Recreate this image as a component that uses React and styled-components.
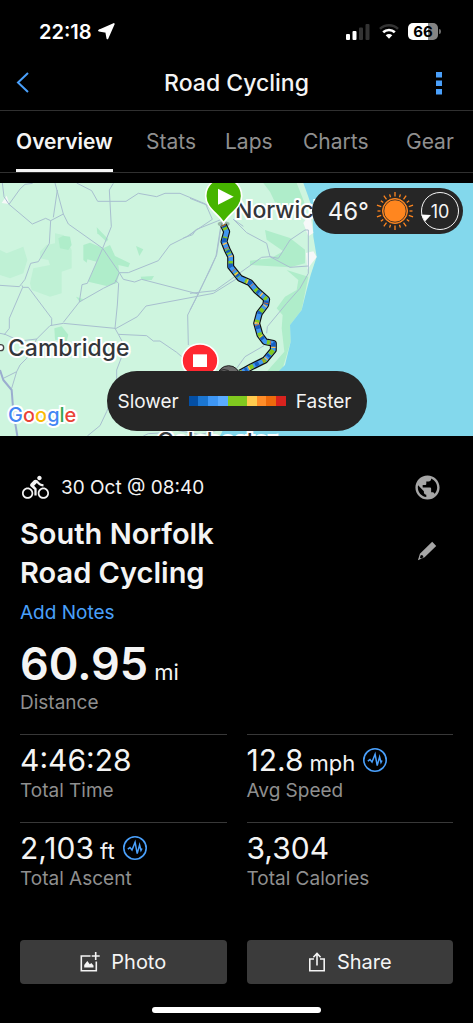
import styled, { createGlobalStyle } from 'styled-components'
import { MdDirectionsBike, MdPublic } from 'react-icons/md'

const GlobalStyle = createGlobalStyle`
  * {
    box-sizing: border-box;
  }

  body {
    margin: 0;
    background: #000;
    color: #f4f4f4;
    font-family: Inter, 'Liberation Sans', sans-serif;
  }

  button {
    padding: 0;
    border: 0;
    background: none;
    color: inherit;
    font: inherit;
    cursor: pointer;
  }

  svg {
    display: block;
    flex: none;
  }
`

const Screen = styled.div`
  display: flex;
  flex-direction: column;
  min-height: 100vh;
`

const StatusBar = styled.div`
  display: flex;
  align-items: center;
  justify-content: space-between;
  height: 56px;
  padding: 7px 32px 0 39px;
`

const StatusGroup = styled.div`
  display: flex;
  align-items: center;
  gap: ${({ $gap }) => $gap}px;
`

const Clock = styled.span`
  color: #fff;
  font-size: 20px;
  font-weight: 600;
`

const Battery = styled.span`
  display: flex;
  align-items: center;
  justify-content: center;
  width: 30px;
  height: 17px;
  border-radius: 5px;
  background: linear-gradient(90deg, #fff 66%, #848484 66%);
  color: #000;
  font-size: 15px;
  font-weight: 700;
`

const BatteryBox = styled.span`
  display: flex;
  align-items: center;
  gap: 1px;

  &::after {
    content: '';
    width: 2px;
    height: 5px;
    border-radius: 0 2px 2px 0;
    background: #6a6a6a;
  }
`

const NavBar = styled.header`
  display: grid;
  grid-template-columns: 44px 1fr 44px;
  align-items: center;
  height: 54px;
  padding: 0 12px;
`

const NavButton = styled.button`
  display: flex;
  align-items: center;
  justify-content: ${({ $end }) => ($end ? 'flex-end' : 'flex-start')};
  height: 44px;
  padding: 0 ${({ $end }) => ($end ? 19 : 4)}px;
`

const NavTitle = styled.h1`
  margin: 0;
  font-size: 23px;
  font-weight: 500;
  text-align: center;
`

const Tabs = styled.nav`
  display: grid;
  grid-template-columns: 130fr 79fr 78fr 103fr 67fr;
  height: 63px;
  padding-left: 16px;
  border-top: 1px solid #303030;
  border-bottom: 1px solid #303030;
`

const Tab = styled.button`
  justify-self: start;
  padding-top: 3px;
  border-bottom: 3px solid ${({ $active }) => ($active ? '#f4f4f4' : 'transparent')};
  color: ${({ $active }) => ($active ? '#f4f4f4' : '#8f8f8f')};
  font-size: 21px;
  font-weight: ${({ $active }) => ($active ? 600 : 400)};
`

const MapArea = styled.section`
  position: relative;
  height: 253px;
  margin-top: 10px;
  overflow: hidden;
  background: #cef5df;
`

const MapLayer = styled.svg`
  position: absolute;
  inset: 0;
  width: 100%;
  height: 100%;
`

const MapLabel = styled.span`
  position: absolute;
  left: ${({ $x }) => $x}px;
  top: ${({ $y }) => $y}px;
  color: #33363a;
  font-size: 23px;
  font-weight: 500;
  line-height: 28px;
  -webkit-text-stroke: 4px #fff;
  paint-order: stroke fill;
`

const GoogleMark = styled(MapLabel)`
  font-size: 20px;
`

const Letter = styled.span`
  color: ${({ $color }) => $color};
`

const Weather = styled.div`
  position: absolute;
  top: 5px;
  right: 10px;
  display: flex;
  align-items: center;
  gap: 7px;
  height: 46px;
  padding: 0 4px 0 16px;
  border-radius: 23px;
  background: #262626;
  font-size: 24px;
`

const Wind = styled.div`
  position: relative;
  display: flex;
  align-items: center;
  justify-content: center;
  width: 38px;
  height: 38px;
  border: 1px solid #f4f4f4;
  border-radius: 50%;
  font-size: 18px;

  svg {
    position: absolute;
    left: -1px;
    top: 21px;
  }
`

const Legend = styled.div`
  position: absolute;
  left: 50%;
  bottom: 5px;
  display: flex;
  align-items: center;
  gap: 10px;
  height: 60px;
  padding: 0 15px 0 11px;
  border-radius: 30px;
  background: #262626;
  font-size: 19px;
  transform: translateX(-50%);
`

const Scale = styled.div`
  display: flex;
  width: 97px;
  height: 10px;
`

const Swatch = styled.span`
  flex: 1;
  background: ${({ $color }) => $color};
`

const Details = styled.main`
  display: flex;
  flex-direction: column;
  flex: 1;
  padding: 36px 20px 10px;
`

const Row = styled.div`
  display: flex;
  align-items: center;
  justify-content: space-between;
`

const DateLine = styled.div`
  display: flex;
  align-items: center;
  gap: 12px;
  height: 30px;
  padding-left: 2px;
  font-size: 19px;
`

const IconButton = styled.button`
  display: flex;
  align-items: center;
  justify-content: center;
  width: 30px;
  height: 30px;
  margin-right: 11px;
  color: #a6a6a6;
`

const ActivityName = styled.h2`
  max-width: 240px;
  margin: 12px 0 8px;
  font-size: 29px;
  font-weight: 600;
  line-height: 39px;
`

const NotesLink = styled.a`
  align-self: flex-start;
  color: #4aa0fb;
  font-size: 19px;
  line-height: 26px;
  text-decoration: none;
`

const Distance = styled.div`
  margin: 12px 0 18px;
`

const Value = styled.div`
  display: flex;
  align-items: baseline;
  gap: 6px;
  height: ${({ $large }) => ($large ? 52 : 36)}px;
  font-size: ${({ $large }) => ($large ? 45 : 30)}px;
  font-weight: ${({ $large }) => ($large ? 600 : 400)};
  line-height: ${({ $large }) => ($large ? 52 : 36)}px;

  svg {
    align-self: center;
    margin-left: 2px;
  }
`

const Unit = styled.span`
  font-size: 22px;
  font-weight: 400;
  line-height: 1;
`

const Label = styled.div`
  color: #8f8f8f;
  font-size: 19px;
  line-height: 26px;
`

const TwoColumns = styled.div`
  display: grid;
  grid-template-columns: 1fr 1fr;
  column-gap: 20px;
`

const Stat = styled.div`
  height: 88px;
  padding-top: 7px;
  border-top: 1px solid #383838;
`

const Actions = styled(TwoColumns)`
  margin-top: 30px;
`

const ActionButton = styled.button`
  display: flex;
  align-items: center;
  justify-content: center;
  gap: 11px;
  height: 44px;
  border-radius: 4px;
  background: #3b3b3b;
  font-size: 20px;
`

const HomeIndicator = styled.div`
  align-self: center;
  width: 169px;
  height: 6px;
  margin-top: auto;
  border-radius: 3px;
  background: #fff;
`

const tabs = ['Overview', 'Stats', 'Laps', 'Charts', 'Gear']

const stats = [
  { label: 'Total Time', value: '4:46:28' },
  { label: 'Avg Speed', value: '12.8', unit: 'mph', trend: true },
  { label: 'Total Ascent', value: '2,103', unit: 'ft', trend: true },
  { label: 'Total Calories', value: '3,304' },
]

const speedColors = [
  '#034fa5',
  '#1b76d2',
  '#3e97f5',
  '#5aabff',
  '#80c91f',
  '#80c91f',
  '#ffcb4e',
  '#ff8d28',
  '#ed6a0c',
  '#d8231e',
]

const googleLetters = [
  ['G', '#4285f4'],
  ['o', '#ea4335'],
  ['o', '#fbbc05'],
  ['g', '#4285f4'],
  ['l', '#34a853'],
  ['e', '#ea4335'],
]

const paleWoods = [
  '0,201 20,211 70,191 82,231 70,271 30,286 0,276',
  '120,206 140,186 165,181 165,151 190,156 215,201 215,256 185,266 185,331 150,341 95,321 90,301 100,256 150,246 145,231 120,226',
]

const woods = [
  '175,166 190,158 210,161 215,186 205,201 180,196',
  '250,186 270,179 310,196 330,186 345,219 390,241 385,253 355,246 358,271 350,301 320,309 265,296 290,236 262,229 260,239 250,231',
  '290,133 325,169 320,176 292,151',
  '408,189 430,199 418,219',
  '422,281 462,279 455,291 425,291',
  '228,341 250,349 240,358',
  '163,436 185,430 205,455 200,475 165,470',
  '790,0 890,0 918,71 880,90 826,60 810,26',
  '795,141 870,165 915,200 915,241 870,253 750,246 750,233 812,226 850,205 800,170',
  '860,261 925,281 905,381 870,426 872,476 845,566 800,566 853,506 845,436 848,396 830,376 855,341 890,321 895,291',
]

const roads = [
  '7,0 12,41 27,64 60,18 75,4 98,1',
  '27,64 97,123 137,106 152,113 190,93',
  '165,0 190,93 205,123 308,196 358,269 385,269 475,233 510,186 560,161 637,109 617,63 540,31 495,31 470,41 415,31 378,55 293,55 275,23 230,0',
  '172,21 160,103',
  '550,165 578,155 588,140',
  '340,1 328,21 334,131 308,196 262,301 246,305 238,357 190,418',
  '152,113 148,181 115,236 92,241 75,289 58,311 0,307',
  '358,269 345,299 310,316 238,357',
  '358,269 370,289 404,297 425,289 595,333 648,219 662,131',
  '345,291 356,301 352,366 345,436',
  '66,307 68,313 28,406 28,436 12,456',
  '68,313 85,313 155,406 155,428',
  '720,281 640,331 438,369 412,401 345,438',
  '595,333 563,396 565,486',
  '0,451 15,454 60,474 110,468 150,428 190,421 345,436 355,454 440,458 460,474 480,474 530,508 545,521',
  '355,454 367,476 367,516 350,561 350,606 320,686 300,728 262,759',
  '110,468 80,526 60,546 50,566 35,616',
  '10,586 50,566',
  '570,46 620,66 665,109',
  '570,156 590,139 665,109',
  '665,121 650,216 630,261 570,381',
  '570,331 645,323 785,223 810,221 870,253 925,249 925,141 915,141 870,171 835,226 810,221 800,181 740,149 700,109 730,130',
  '925,249 925,271 900,316 860,361 802,431 800,451',
  '792,488 735,521 710,556',
  '430,759 445,752 480,750 520,740 600,755 650,742',
]

const route =
  '670,126 680,146 672,176 682,201 692,221 692,251 720,286 750,299 768,321 800,349 797,366 778,391 770,421 780,456 795,476 820,481 820,501 795,531 755,551 720,570'

const routeDashes = [
  ['#82c91e', '16 22 9 31'],
  ['#175ec0', '8 34 12 27'],
  ['#ffc04d', '3 55 4 38'],
  ['#e96a1c', '2 71'],
]

function MapDrawing() {
  return (
    <MapLayer viewBox="0 0 1419 759" preserveAspectRatio="xMinYMid slice">
      {paleWoods.map((points) => (
        <polygon key={points} points={points} fill="#bff1d5" />
      ))}
      {woods.map((points) => (
        <polygon key={points} points={points} fill="#afedca" />
      ))}
      <path
        d="M910 0 925 41 938 81 940 161 950 221 932 276 920 321 905 381 870 426 872 476 855 546 800 600 690 700 660 759H1419V0Z"
        fill="#83d8ec"
      />
      <path d="M918 210 940 205 950 222 932 245 922 260ZM910 120l20-30 10 60-15 10ZM5 60l15-22 8 25Z" fill="#f6f8f8" />
      <g fill="none" stroke="#a8bfcf" strokeWidth="3" strokeLinejoin="round">
        {roads.map((points) => (
          <polyline key={points} points={points} />
        ))}
        <polyline points="0,561 10,591 35,621 40,686 52,759" stroke="#9badcf" strokeWidth="6" />
      </g>
      <circle cx="2" cy="494" r="9" fill="#fff" stroke="#444" strokeWidth="4" />
      <g fill="none" strokeLinejoin="round">
        <polyline points={route} stroke="#111" strokeWidth="21" />
        <polyline points={route} stroke="#4297ee" strokeWidth="14" />
        {routeDashes.map(([color, dash]) => (
          <polyline key={color} points={route} stroke={color} strokeWidth="13" strokeDasharray={dash} />
        ))}
      </g>
    </MapLayer>
  )
}

function MapPins() {
  return (
    <MapLayer viewBox="0 0 1419 759" preserveAspectRatio="xMinYMid slice">
      <ellipse cx="671" cy="123" rx="18" ry="8" fill="#000" opacity="0.25" />
      <path
        d="M671 120C656 92 617 76 617 39a54 54 0 0 1 108 0C725 76 686 92 671 120Z"
        fill="#46b400"
        stroke="#fff"
        strokeWidth="5"
      />
      <path d="M654 17 701 41 654 65Z" fill="#fff" />
      <circle cx="686" cy="582" r="34" fill="#6a6a6a" stroke="#222" strokeWidth="3" />
      <circle cx="672" cy="590" r="30" fill="none" stroke="#222" strokeWidth="3" />
      <ellipse cx="600" cy="533" rx="54" ry="50" fill="#ff2730" stroke="#fff" strokeWidth="5" />
      <path d="M579 514h42v38h-42Z" fill="#fff" />
    </MapLayer>
  )
}

function Sun() {
  return (
    <svg width="38" height="38" viewBox="-19 -19 38 38" stroke="#ff861f">
      <circle r="12.5" fill="#ff861f" strokeWidth="1" />
      <circle r="11.2" fill="none" stroke="#262626" strokeWidth="0.8" />
      {Array.from({ length: 20 }, (_, i) => (
        <path key={i} d={i % 2 ? 'M0-14.5V-17.5' : 'M0-14.5V-19'} strokeWidth="1.3" transform={`rotate(${i * 18})`} />
      ))}
    </svg>
  )
}

function TrendIcon() {
  return (
    <svg width="24" height="24" viewBox="0 0 24 24" fill="none" stroke="#4aa0fb">
      <circle cx="12" cy="12" r="11.2" strokeWidth="1.6" />
      <path d="M4.8 13.2 7 11.6 9 14 12.1 6.2 14.2 17.6 16.6 9 18 14.4 19 12.5" strokeWidth="1.5" />
    </svg>
  )
}

function StatusIcons() {
  return (
    <StatusGroup $gap={9}>
      <svg width="24" height="16" viewBox="0 0 24 16" fill="#fff">
        <rect y="10" width="4" height="6" rx="1" />
        <rect x="6.5" y="7" width="4" height="9" rx="1" />
        <rect x="13" y="3.5" width="4" height="12.5" rx="1" opacity="0.2" />
        <rect x="19.5" width="4" height="16" rx="1" opacity="0.2" />
      </svg>
      <svg width="20" height="15" viewBox="0 0 20 15" fill="none" stroke="#fff" strokeWidth="2.6">
        <path d="M1 4.9C6 .1 14 .1 19 4.9" opacity="0.2" />
        <path d="M4.2 8.3C7.4 5.2 12.6 5.2 15.8 8.3" />
        <path d="M6.7 11.3C8.6 9.5 11.4 9.5 13.3 11.3L10 14.8Z" fill="#fff" stroke="none" />
      </svg>
      <BatteryBox>
        <Battery>66</Battery>
      </BatteryBox>
    </StatusGroup>
  )
}

export default function App() {
  return (
    <Screen>
      <GlobalStyle />

      <StatusBar>
        <StatusGroup $gap={6}>
          <Clock>22:18</Clock>
          <svg width="17" height="17" viewBox="0 0 17 17">
            <path
              d="M15.8 1 9.4 15.4 8.2 8.8 1 7.5Z"
              fill="#fff"
              stroke="#fff"
              strokeWidth="1.8"
              strokeLinejoin="round"
            />
          </svg>
        </StatusGroup>
        <StatusIcons />
      </StatusBar>

      <NavBar>
        <NavButton aria-label="Back">
          <svg width="13" height="22" viewBox="0 0 13 22" fill="none" stroke="#4aa0fb" strokeWidth="2">
            <path d="M12 1 2 10.5 12 20" />
          </svg>
        </NavButton>
        <NavTitle>Road Cycling</NavTitle>
        <NavButton $end aria-label="More options">
          <svg width="6" height="23" viewBox="0 0 6 23" fill="#4aa0fb">
            <path d="M0 0h6v5.5H0ZM0 8.5h6V14H0ZM0 17h6v5.5H0Z" />
          </svg>
        </NavButton>
      </NavBar>

      <Tabs>
        {tabs.map((tab, i) => (
          <Tab key={tab} $active={i === 0}>
            {tab}
          </Tab>
        ))}
      </Tabs>

      <MapArea>
        <MapDrawing />
        <MapLabel $x={235} $y={13}>
          Norwich
        </MapLabel>
        <MapLabel $x={8} $y={151}>
          Cambridge
        </MapLabel>
        <MapLabel $x={157} $y={244}>
          Colchester
        </MapLabel>
        <GoogleMark $x={8} $y={218}>
          {googleLetters.map(([letter, color], i) => (
            <Letter key={i} $color={color}>
              {letter}
            </Letter>
          ))}
        </GoogleMark>
        <MapPins />
        <Weather>
          46°
          <Sun />
          <Wind>
            <svg width="10" height="8" viewBox="0 0 10 8" fill="#fff">
              <path d="M0 .5 10 1 4 7.5Z" />
            </svg>
            10
          </Wind>
        </Weather>
        <Legend>
          Slower
          <Scale>
            {speedColors.map((color, i) => (
              <Swatch key={i} $color={color} />
            ))}
          </Scale>
          Faster
        </Legend>
      </MapArea>

      <Details>
        <Row>
          <DateLine>
            <MdDirectionsBike size={27} />
            30 Oct @ 08:40
          </DateLine>
          <IconButton aria-label="Privacy">
            <MdPublic size={29} />
          </IconButton>
        </Row>

        <Row>
          <ActivityName>South Norfolk Road Cycling</ActivityName>
          <IconButton aria-label="Edit name">
            <svg width="20" height="20" viewBox="0 0 20 20" fill="currentColor">
              <path d="M15.2.8 19.2 5 7.6 16.2.9 19.2 2.9 12.8ZM3.9 14.1 2.9 16.6 4 17.5 6.4 16.2 5.9 14.4Z" fillRule="evenodd" />
            </svg>
          </IconButton>
        </Row>

        <NotesLink href="#notes">Add Notes</NotesLink>

        <Distance>
          <Value $large>
            60.95 <Unit>mi</Unit>
          </Value>
          <Label>Distance</Label>
        </Distance>

        <TwoColumns>
          {stats.map(({ label, value, unit, trend }) => (
            <Stat key={label}>
              <Value>
                {value}
                {unit && <Unit>{unit}</Unit>}
                {trend && <TrendIcon />}
              </Value>
              <Label>{label}</Label>
            </Stat>
          ))}
        </TwoColumns>

        <Actions>
          <ActionButton>
            <svg width="20" height="20" viewBox="0 0 20 20" fill="none" stroke="#f4f4f4" strokeWidth="1.6">
              <path d="M10.5 4H1.3V18.7H16.3V9.5M15.7 0V8M11.7 4H19.7" />
              <path d="M4.2 15.6V13L7.3 9 9.8 12.2 11.3 11 13.5 13.5V15.6Z" fill="#f4f4f4" stroke="none" />
            </svg>
            Photo
          </ActionButton>
          <ActionButton>
            <svg width="18" height="20" viewBox="0 0 18 20" fill="none" stroke="#f4f4f4" strokeWidth="1.6">
              <path d="M6 7H1.8V18.7H16.2V7H12M9 13.5V1.6M5.4 5.2 9 1.4 12.6 5.2" />
            </svg>
            Share
          </ActionButton>
        </Actions>

        <HomeIndicator />
      </Details>
    </Screen>
  )
}
